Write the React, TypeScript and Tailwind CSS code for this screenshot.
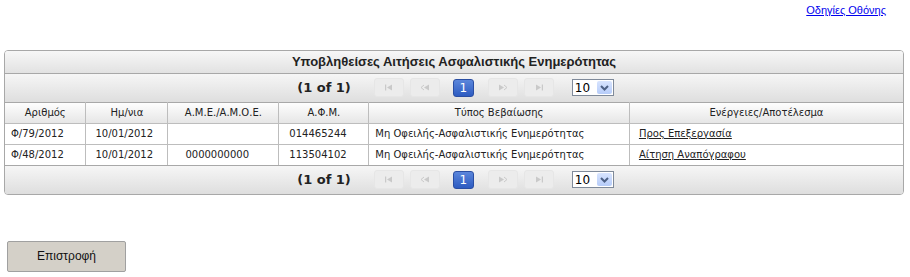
import React from "react";

const cols = [
  { title: "Αριθμός", w: 81, pl: 6 },
  { title: "Ημ/νια", w: 82, pl: 9 },
  { title: "Α.Μ.Ε./Α.Μ.Ο.Ε.", w: 111, pl: 17 },
  { title: "Α.Φ.Μ.", w: 90, pl: 10 },
  { title: "Τύπος Βεβαίωσης", w: 261, pl: 6 },
  { title: "Ενέργειες/Αποτέλεσμα", w: 274, pl: 9 },
];

const rows = [
  ["Φ/79/2012", "10/01/2012", "", "014465244", "Μη Οφειλής-Ασφαλιστικής Ενημερότητας", "Προς Επεξεργασία"],
  ["Φ/48/2012", "10/01/2012", "0000000000", "113504102", "Μη Οφειλής-Ασφαλιστικής Ενημερότητας", "Αίτηση Αναπόγραφου"],
];

function NavIcon({ kind }: { kind: "first" | "prev" | "next" | "last" }) {
  const c = "#c9c9c9";
  return (
    <svg width="10" height="7" viewBox="0 0 10 7">
      {kind === "first" && (
        <>
          <rect x="1" y="0.5" width="1.2" height="6" fill={c} />
          <path d="M3 3.5 L8 0.5 L8 6.5 Z" fill={c} />
        </>
      )}
      {kind === "prev" && (
        <>
          <path d="M4 1 L1 3.5 L4 6" stroke={c} fill="none" strokeWidth="1" />
          <path d="M4 3.5 L9 0.5 L9 6.5 Z" fill={c} />
        </>
      )}
      {kind === "next" && (
        <>
          <path d="M1 0.5 L6 3.5 L1 6.5 Z" fill={c} />
          <path d="M6 1 L9 3.5 L6 6" stroke={c} fill="none" strokeWidth="1" />
        </>
      )}
      {kind === "last" && (
        <>
          <path d="M2 0.5 L7 3.5 L2 6.5 Z" fill={c} />
          <rect x="7.8" y="0.5" width="1.2" height="6" fill={c} />
        </>
      )}
    </svg>
  );
}

function NavBtn({ kind }: { kind: "first" | "prev" | "next" | "last" }) {
  return (
    <div className="flex h-[19px] w-[30px] items-center justify-center rounded-[3px] border border-[#e6e6e6] bg-[#ececec]">
      <NavIcon kind={kind} />
    </div>
  );
}

function Paginator() {
  return (
    <div className="flex h-[29px] items-center justify-center border-t border-[#a8a8a8] bg-gradient-to-b from-[#f6f6f6] to-[#dedede] pl-[3px]">
      <span className="font-['DejaVu_Sans',sans-serif] text-[13px] font-bold text-[#222]">(1 of 1)</span>
      <div className="ml-[23px]">
        <NavBtn kind="first" />
      </div>
      <div className="ml-[6px]">
        <NavBtn kind="prev" />
      </div>
      <div className="ml-[13px] flex h-[18px] w-[21px] items-center justify-center rounded-[3px] border border-[#2a4ea3] bg-gradient-to-b from-[#5b86db] to-[#2d5bc1] font-['DejaVu_Sans',sans-serif] text-[12px] text-white">
        1
      </div>
      <div className="ml-[14px]">
        <NavBtn kind="next" />
      </div>
      <div className="ml-[6px]">
        <NavBtn kind="last" />
      </div>
      <div className="ml-[18px] flex h-[17px] w-[42px] items-center border border-[#7f8a9a] bg-white pl-[2px] pr-[1px]">
        <span className="flex-1 font-['DejaVu_Sans',sans-serif] text-[12px] leading-none text-black">10</span>
        <div className="flex h-[13px] w-[15px] items-center justify-center rounded-[2px] bg-gradient-to-b from-[#d8e4fe] to-[#b6ccf9]">
          <svg width="9" height="6" viewBox="0 0 9 6">
            <path d="M1 1 L4.5 4.5 L8 1" stroke="#4d6185" strokeWidth="2" fill="none" />
          </svg>
        </div>
      </div>
    </div>
  );
}

export default function App() {
  return (
    <div className="h-[277px] w-[910px] bg-white font-['DejaVu_Sans',sans-serif]">
      <div className="flex justify-end pr-[24px] pt-[2px]">
        <a className="font-['Liberation_Sans',sans-serif] text-[11px] text-[#0000ee] underline" href="#">
          Οδηγίες Οθόνης
        </a>
      </div>
      <div className="ml-[4px] mt-[31px] w-[900px] overflow-hidden rounded-[4px] border border-[#a8a8a8]">
        <div className="flex h-[22px] items-center justify-center bg-gradient-to-b from-[#f7f7f7] to-[#e2e2e2] font-['Liberation_Sans',sans-serif] text-[13px] font-bold text-[#222]">
          Υποβληθείσες Αιτήσεις Ασφαλιστικής Ενημερότητας
        </div>
        <Paginator />
        <table className="w-full border-collapse border-t border-[#a8a8a8]">
          <thead>
            <tr className="h-[21px] bg-gradient-to-b from-white to-[#e6e6e6]">
              {cols.map((c) => (
                <th
                  key={c.title}
                  style={{ width: c.w }}
                  className="border-b border-l border-[#bdbdbd] p-0 text-center text-[10px] font-normal text-[#222] first:border-l-0"
                >
                  {c.title}
                </th>
              ))}
            </tr>
          </thead>
          <tbody>
            {rows.map((r, ri) => (
              <tr key={ri} className="h-[21px] bg-white">
                {r.map((v, ci) => (
                  <td
                    key={ci}
                    style={{ paddingLeft: cols[ci].pl }}
                    className="border-b border-l border-[#bdbdbd] py-0 text-left text-[10px] text-[#222] first:border-l-0"
                  >
                    {ci === 5 ? <a className="text-[#222] underline" href="#">{v}</a> : v}
                  </td>
                ))}
              </tr>
            ))}
          </tbody>
        </table>
        <div className="-mt-px">
          <Paginator />
        </div>
      </div>
      <div className="ml-[7px] mt-[46px]">
        <button className="h-[31px] w-[119px] rounded-[2px] border border-[#a0a0a0] bg-[#d4d0c8] font-['Liberation_Sans',sans-serif] text-[12px] text-[#111]">
          Επιστροφή
        </button>
      </div>
    </div>
  );
}
